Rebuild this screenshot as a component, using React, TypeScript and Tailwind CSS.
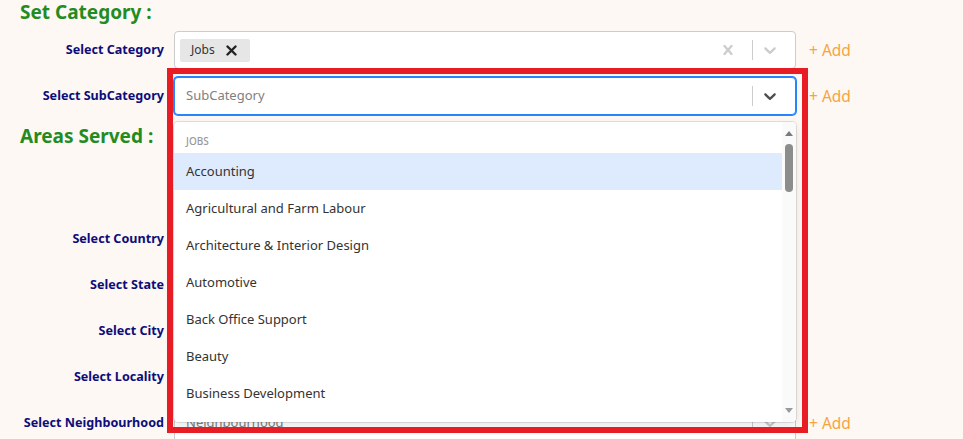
import React from 'react';

const FONT = { fontFamily: '"Noto Sans", "Open Sans", sans-serif' };

const OPTIONS = [
  'Accounting',
  'Agricultural and Farm Labour',
  'Architecture & Interior Design',
  'Automotive',
  'Back Office Support',
  'Beauty',
  'Business Development',
  'Call Centre',
  'Cleaning',
];

function Chevron({ color }: { color: string }) {
  return (
    <svg width="20" height="20" viewBox="0 0 20 20" fill={color}>
      <path d="M4.516 7.548c0.436-0.446 1.043-0.481 1.576 0l3.908 3.747 3.908-3.747c0.533-0.481 1.141-0.446 1.574 0 0.436 0.445 0.408 1.197 0 1.615-0.406 0.418-4.695 4.502-4.695 4.502-0.217 0.223-0.502 0.335-0.787 0.335s-0.57-0.112-0.789-0.335c0 0-4.287-4.084-4.695-4.502s-0.436-1.17 0-1.615z" />
    </svg>
  );
}

function ClearIcon() {
  return (
    <svg width="20" height="20" viewBox="0 0 20 20" fill="#cccccc">
      <path d="M14.348 14.849c-0.469 0.469-1.229 0.469-1.697 0l-2.651-3.030-2.651 3.029c-0.469 0.469-1.229 0.469-1.697 0-0.469-0.469-0.469-1.229 0-1.697l2.758-3.15-2.759-3.152c-0.469-0.469-0.469-1.228 0-1.697s1.228-0.469 1.697 0l2.652 3.031 2.651-3.031c0.469-0.469 1.228-0.469 1.697 0s0.469 1.229 0 1.697l-2.758 3.152 2.758 3.15c0.469 0.469 0.469 1.229 0 1.698z" />
    </svg>
  );
}

function Label({ children }: { children: React.ReactNode }) {
  return (
    <div className="text-right text-[12.6px] font-bold text-[#0d0d7a] leading-none whitespace-nowrap">
      {children}
    </div>
  );
}

function AddLink() {
  return <span className="text-[15.5px] text-[#f7a440] whitespace-nowrap">+ Add</span>;
}

function SelectBox({
  placeholder,
  focused,
  children,
  clearable,
  menu,
}: {
  placeholder?: string;
  focused?: boolean;
  children?: React.ReactNode;
  clearable?: boolean;
  menu?: React.ReactNode;
}) {
  return (
    <div className="relative">
      <div
        className={
          focused
            ? 'h-[38px] bg-white rounded-[4px] border border-[#2684ff] shadow-[0_0_0_1px_#2684ff] flex items-center'
            : 'h-[38px] bg-white rounded-[4px] border border-[#cccccc] flex items-center'
        }
      >
        <div className="flex-1 flex items-center pl-[4px]">
          {children ?? (
            <span className="pl-[7px] text-[13px] text-[#808080]">{placeholder}</span>
          )}
        </div>
        {clearable && (
          <div className="flex items-center mr-[14px]">
            <ClearIcon />
          </div>
        )}
        <div className="w-px h-[20px] bg-[#cccccc]" />
        <div className="flex items-center ml-[7px] mr-[15px]">
          <Chevron color={focused ? '#4d4d4d' : '#cccccc'} />
        </div>
      </div>
      {menu}
    </div>
  );
}

function Menu() {
  return (
    <div className="absolute left-0 top-full mt-[7px] w-full h-[300px] bg-white rounded-[4px] shadow-[0_0_0_1px_rgba(0,0,0,0.1),0_4px_11px_rgba(0,0,0,0.1)] z-10 flex overflow-hidden">
      <div className="flex-1 pt-[12px] overflow-hidden">
        <div className="px-[12px] text-[10px] font-medium text-[#999999] uppercase leading-[14px] mb-[5px]">
          Jobs
        </div>
        {OPTIONS.map((o, i) => (
          <div
            key={o}
            className={
              i === 0
                ? 'h-[37px] px-[12px] flex items-center text-[13px] text-[#333333] bg-[#deebff]'
                : 'h-[37px] px-[12px] flex items-center text-[13px] text-[#333333]'
            }
          >
            {o}
          </div>
        ))}
      </div>
      <div className="w-[14px] bg-[#fafafa] flex flex-col items-center pt-[9px] pb-[9px]">
        <svg width="8" height="5" viewBox="0 0 8 5">
          <path d="M4 0 L8 5 L0 5 Z" fill="#7a7a7a" />
        </svg>
        <div className="w-[8px] h-[48px] rounded-full bg-[#8c8c8c] mt-[8px]" />
        <div className="flex-1" />
        <svg width="8" height="5" viewBox="0 0 8 5">
          <path d="M0 0 L8 0 L4 5 Z" fill="#9a9a9a" />
        </svg>
      </div>
    </div>
  );
}

export default function App() {
  return (
    <div className="relative min-h-screen bg-[#fdf8f4] overflow-hidden" style={FONT}>
      <div className="pl-[20px]">
        <h2 className="text-[19px] font-bold text-[#228b22] leading-[24px]">Set Category :</h2>

        <div className="mt-[7px] grid grid-cols-[144px_622px_auto] gap-x-[10px] gap-y-[8px] items-center">
          <Label>Select Category</Label>
          <SelectBox clearable>
            <div className="ml-[1px] h-[23px] rounded-[2px] bg-[#e6e6e6] flex items-center pl-[11px] pr-[13px]">
              <span className="text-[12px] text-[#333333]">Jobs</span>
              <svg width="11" height="11" viewBox="0 0 11 11" className="ml-[11px]">
                <path d="M1.5 1.5 L9.5 9.5 M9.5 1.5 L1.5 9.5" stroke="#222222" strokeWidth="2.4" strokeLinecap="round" />
              </svg>
            </div>
          </SelectBox>
          <div className="pl-[3px]">
            <AddLink />
          </div>

          <Label>Select SubCategory</Label>
          <SelectBox placeholder="SubCategory" focused menu={<Menu />} />
          <div className="pl-[3px]">
            <AddLink />
          </div>
        </div>

        <h2 className="mt-[9px] text-[19px] font-bold text-[#228b22] leading-[24px]">Areas Served :</h2>

        <div className="mt-[72px] grid grid-cols-[144px_622px_auto] gap-x-[10px] gap-y-[8px] items-center">
          <Label>Select Country</Label>
          <SelectBox placeholder="Country" />
          <div />
          <Label>Select State</Label>
          <SelectBox placeholder="State" />
          <div />
          <Label>Select City</Label>
          <SelectBox placeholder="City" />
          <div />
          <Label>Select Locality</Label>
          <SelectBox placeholder="Locality" />
          <div />
          <Label>Select Neighbourhood</Label>
          <SelectBox placeholder="Neighbourhood" />
          <div className="pl-[3px]">
            <AddLink />
          </div>
        </div>
      </div>

      <div className="absolute left-[167px] top-[68px] w-[641px] h-[365px] border-[6px] border-[#e81c24] z-20 pointer-events-none" />
    </div>
  );
}
